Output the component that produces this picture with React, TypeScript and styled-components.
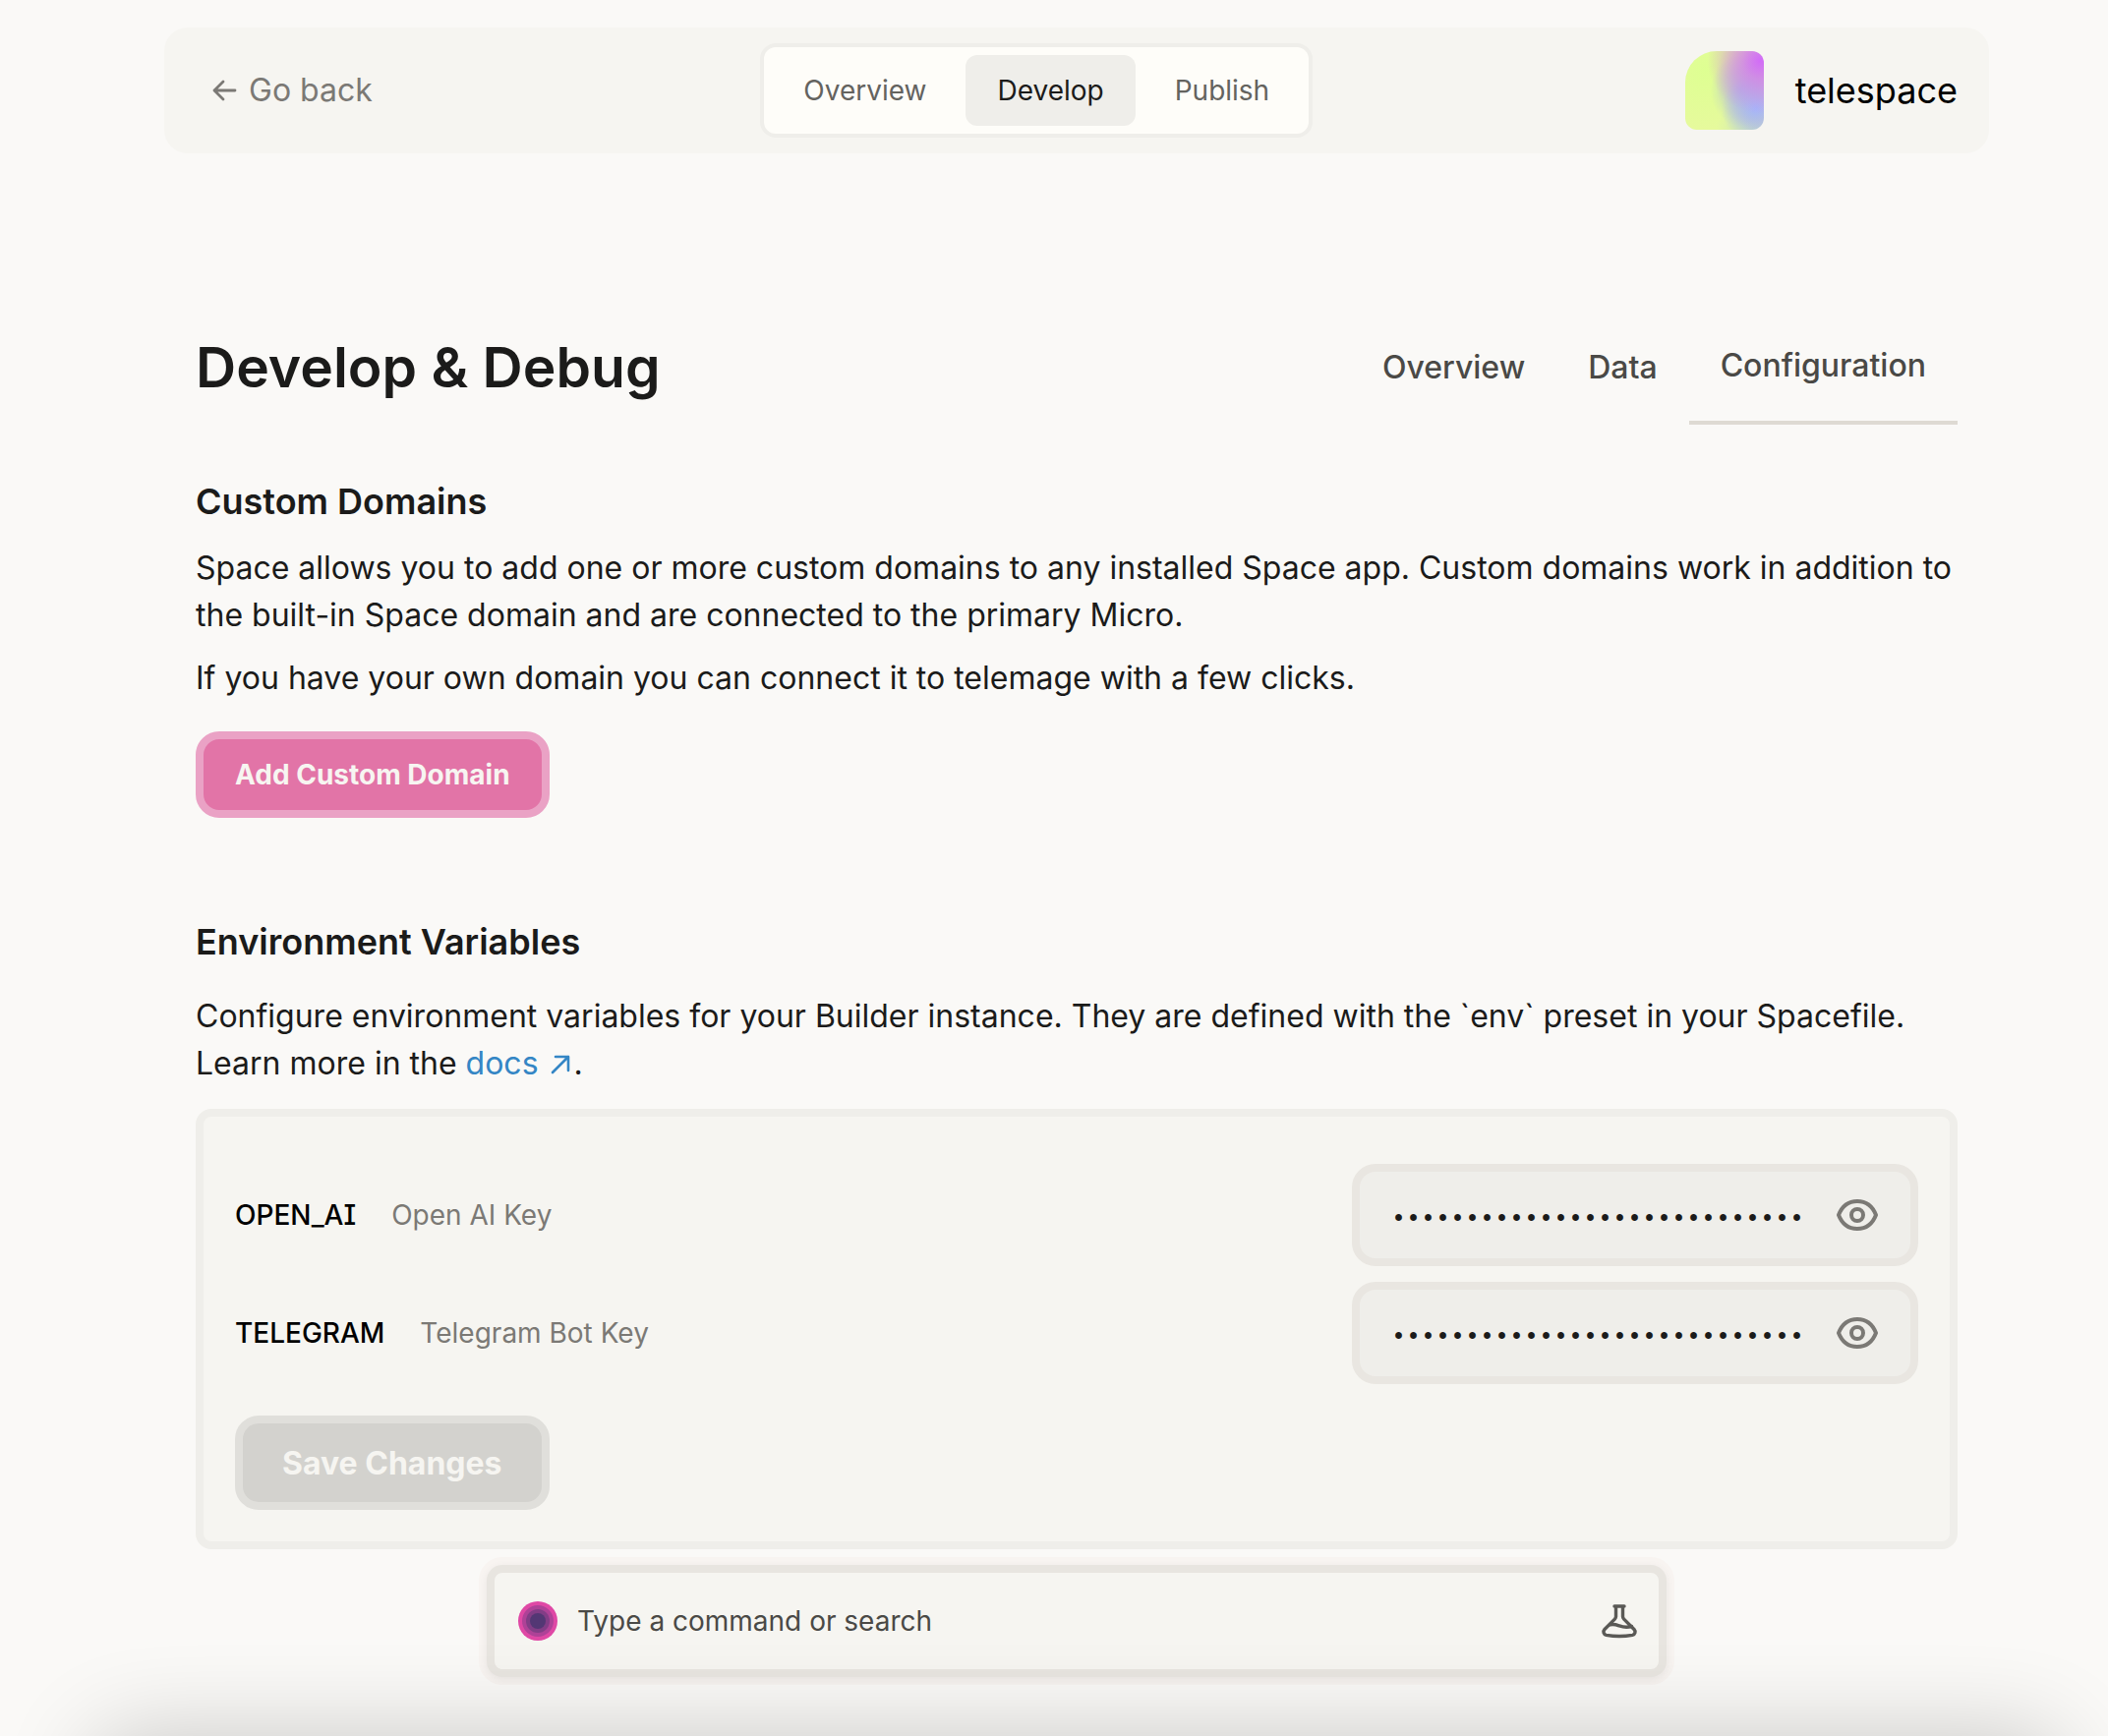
import React, { useState } from "react";
import styled, { createGlobalStyle } from "styled-components";

const GlobalStyle = createGlobalStyle`
  *, *::before, *::after { box-sizing: border-box; }
  body {
    margin: 0;
    background: #faf9f7;
    color: #1b1b1a;
    font-family: Inter, "Liberation Sans", sans-serif;
    font-size: 32px;
    line-height: 48px;
  }
  h1, h2, p { margin: 0; }
  button, input { font-family: inherit; }
  button { cursor: pointer; }
`;

const Page = styled.div`
  position: relative;
  overflow: hidden;
  min-height: 100vh;
  padding: 28px 121px 52px 167px;
  display: flex;
  flex-direction: column;
`;

const Header = styled.header`
  display: flex;
  align-items: center;
  justify-content: space-between;
  padding: 16px 32px;
  border-radius: 24px;
  background: #f6f5f1;
`;

const BackLink = styled.a`
  display: flex;
  align-items: center;
  gap: 12px;
  padding: 0 16px;
  color: #7b7975;
  text-decoration: none;
`;

const Segment = styled.nav`
  display: flex;
  gap: 8px;
  padding: 8px;
  border: 4px solid #efeeea;
  border-radius: 16px;
  background: #fefdf9;
`;

const SegmentButton = styled.button<{ $active?: boolean }>`
  height: 72px;
  padding: 0 32px;
  border: 0;
  border-radius: 12px;
  background: ${(p) => (p.$active ? "#efeeea" : "transparent")};
  color: ${(p) => (p.$active ? "#1b1b1a" : "#64635f")};
  font-size: 28px;
`;

const Brand = styled.div`
  display: flex;
  align-items: center;
  gap: 32px;
  color: #000;
  font-size: 36px;
`;

const BrandMark = styled.div`
  width: 80px;
  height: 80px;
  border-radius: 32px 12px 12px 12px;
  background:
    radial-gradient(circle at 96% 12%, #d26bf8 0%, rgba(212, 125, 235, 0.7) 18%, rgba(214, 160, 205, 0) 52%),
    radial-gradient(ellipse 44% 42% at 90% 73%, #a5b6fa 0%, rgba(168, 184, 240, 0.75) 35%, rgba(190, 210, 200, 0) 100%),
    radial-gradient(ellipse 40% 46% at 72% 50%, rgba(170, 182, 225, 0.8) 0%, rgba(200, 215, 185, 0) 100%),
    radial-gradient(ellipse 70% 70% at 108% 36%, rgba(205, 172, 215, 0.95) 0%, rgba(205, 175, 210, 0.8) 40%, rgba(215, 200, 180, 0) 100%),
    radial-gradient(ellipse 60% 50% at 100% 100%, rgba(190, 215, 205, 0.9) 0%, rgba(215, 235, 180, 0) 100%),
    radial-gradient(circle at 25% 25%, #deff92 0%, #e6fa9c 70%);
`;

const Main = styled.main`
  display: flex;
  flex-direction: column;
  padding: 160px 32px 0;
`;

const TitleRow = styled.div`
  display: flex;
  align-items: center;
  justify-content: space-between;
`;

const Title = styled.h1`
  font-size: 57px;
  line-height: 76px;
  font-weight: 600;
`;

const Tabs = styled.nav`
  display: flex;
`;

const Tab = styled.a<{ $active?: boolean }>`
  display: flex;
  align-items: center;
  height: 116px;
  padding: 0 32px;
  border-bottom: ${(p) => (p.$active ? "4px solid #dedad3" : "0")};
  color: #4a4946;
  font-weight: 500;
  text-decoration: none;
`;

const Section = styled.section<{ $top: number }>`
  display: flex;
  flex-direction: column;
  gap: 16px;
  margin-top: ${(p) => p.$top}px;
`;

const SectionTitle = styled.h2<{ $after: number }>`
  margin-bottom: ${(p) => p.$after}px;
  font-size: 36px;
  line-height: 48px;
  font-weight: 600;
`;

const DocsLink = styled.a`
  margin-right: 4px;
  color: #3486c5;
  text-decoration: none;

  svg { margin-left: 12px; }
`;

const PrimaryButton = styled.button`
  align-self: flex-start;
  height: 88px;
  margin-top: 14px;
  padding: 0 32px;
  border: 8px solid #eaa2c5;
  border-radius: 24px;
  background: #e274a7;
  color: #f7f5f1;
  font-size: 28px;
  font-weight: 700;
`;

const Panel = styled.form`
  display: flex;
  flex-direction: column;
  gap: 16px;
  margin-top: 6px;
  padding: 48px 32px 32px;
  border: 8px solid #efeeea;
  border-radius: 16px;
  background: #f6f5f1;
`;

const Row = styled.div`
  display: flex;
  align-items: center;
  justify-content: space-between;
`;

const RowLabel = styled.label`
  display: flex;
  align-items: center;
  gap: 36px;
  font-size: 28px;
`;

const VarName = styled.span`
  color: #000;
  font-weight: 500;
  font-feature-settings: "cv08";
`;

const VarNote = styled.span`
  color: #7b7975;
`;

const SecretBox = styled.div`
  display: flex;
  align-items: center;
  gap: 24px;
  width: 576px;
  height: 104px;
  padding: 0 32px;
  border: 8px solid #e9e6e1;
  border-radius: 24px;
  background: #efeeea;
`;

const SecretInput = styled.input`
  flex: 1;
  min-width: 0;
  padding: 8px 0 0;
  border: 0;
  outline: 0;
  background: transparent;
  color: #1b1b1a;
  font-family: "Liberation Mono", monospace;
  font-size: 25px;
`;

const IconButton = styled.button<{ $dark?: boolean }>`
  display: flex;
  padding: 0;
  border: 0;
  background: transparent;
  color: ${(p) => (p.$dark ? "#5a5956" : "#7b7975")};
`;

const SaveButton = styled.button`
  align-self: flex-start;
  height: 96px;
  margin-top: 16px;
  padding: 0 40px;
  border: 8px solid #e0dfdb;
  border-radius: 24px;
  background: #d3d2ce;
  color: #f6f5f1;
  font-size: 32px;
  font-weight: 700;
`;

const CommandBar = styled.div`
  align-self: center;
  display: flex;
  align-items: center;
  gap: 20px;
  width: 100%;
  max-width: 1200px;
  height: 114px;
  margin-top: 16px;
  padding: 0 20px 0 24px;
  border: 8px solid #e8e5e0;
  border-radius: 16px;
  background: #f6f5f1;
  box-shadow: 0 2px 8px rgba(0, 0, 0, 0.06), 0 0 0 8px #f8f4f1;
`;

const CommandInput = styled.input`
  flex: 1;
  min-width: 0;
  padding: 0;
  border: 0;
  outline: 0;
  background: transparent;
  font-size: 28px;

  &::placeholder { color: #4a4946; opacity: 1; }
`;

const BottomShade = styled.div`
  position: absolute;
  left: 96px;
  right: 48px;
  top: 100%;
  height: 200px;
  border-radius: 32px;
  box-shadow: 0 0 96px rgba(0, 0, 0, 0.2);
  pointer-events: none;
`;

const ArrowLeft = () => (
  <svg width="26" height="24" viewBox="0 0 26 24" fill="none" stroke="currentColor" strokeWidth="2.8" strokeLinecap="round" strokeLinejoin="round" aria-hidden="true">
    <path d="M24 12H3M12 3L3 12l9 9" />
  </svg>
);

const ArrowUpRight = () => (
  <svg width="20" height="20" viewBox="0 0 20 20" fill="none" stroke="currentColor" strokeWidth="2.6" strokeLinecap="round" strokeLinejoin="round" aria-hidden="true">
    <path d="M2 18L18 2M5 2h13v14" />
  </svg>
);

const Eye = () => (
  <svg width="44" height="36" viewBox="0 0 44 36" fill="none" stroke="currentColor" strokeWidth="4" strokeLinejoin="round" aria-hidden="true">
    <path d="M3 18C6.500 9 13.500 4 22 4s15.500 5 19 14c-3.500 9-10.500 14-19 14S6.500 27 3 18z" />
    <circle cx="22" cy="18" r="6" />
  </svg>
);

const Orb = () => (
  <svg width="40" height="40" viewBox="0 0 40 40" aria-hidden="true">
    <circle cx="20" cy="20" r="20" fill="#df48a5" />
    <circle cx="20" cy="20" r="16" fill="#ae4297" />
    <circle cx="20" cy="20" r="12" fill="#823d86" />
    <circle cx="20" cy="20" r="8" fill="#533774" />
  </svg>
);

const Flask = () => (
  <svg width="40" height="40" viewBox="0 0 40 40" fill="none" stroke="currentColor" strokeWidth="3.4" strokeLinecap="round" strokeLinejoin="round" aria-hidden="true">
    <path d="M15 5h10M16.500 5v10.500c0 1-.5 1.800-1.200 2.600L5 28.500c-2 2.200-1 5.300 1.700 5.900 8.600 1.500 18 1.500 26.600 0 2.700-.6 3.700-3.700 1.700-5.900L24.700 18.100c-.7-.8-1.200-1.600-1.200-2.600V5" />
    <path d="M10.500 23.800c4-1 6.500 0 9.500 1.100s7.500 2 12.500.6" />
  </svg>
);

const variables = [
  { name: "OPEN_AI", note: "Open AI Key" },
  { name: "TELEGRAM", note: "Telegram Bot Key" },
];

function SecretRow({ name, note }: { name: string; note: string }) {
  const [value, setValue] = useState("0".repeat(28));
  const [shown, setShown] = useState(false);
  return (
    <Row>
      <RowLabel htmlFor={name}>
        <VarName>{name}</VarName>
        <VarNote>{note}</VarNote>
      </RowLabel>
      <SecretBox>
        <SecretInput
          id={name}
          type={shown ? "text" : "password"}
          value={value}
          onChange={(e) => setValue(e.target.value)}
        />
        <IconButton type="button" aria-label="Toggle value" onClick={() => setShown(!shown)}>
          <Eye />
        </IconButton>
      </SecretBox>
    </Row>
  );
}

export default function App() {
  return (
    <>
      <GlobalStyle />
      <Page>
        <Header>
          <BackLink href="#back">
            <ArrowLeft />
            Go back
          </BackLink>
          <Segment>
            <SegmentButton>Overview</SegmentButton>
            <SegmentButton $active>Develop</SegmentButton>
            <SegmentButton>Publish</SegmentButton>
          </Segment>
          <Brand>
            <BrandMark />
            telespace
          </Brand>
        </Header>
        <Main>
          <TitleRow>
            <Title>Develop &amp; Debug</Title>
            <Tabs>
              <Tab href="#overview">Overview</Tab>
              <Tab href="#data">Data</Tab>
              <Tab href="#configuration" $active>Configuration</Tab>
            </Tabs>
          </TitleRow>
          <Section $top={54}>
            <SectionTitle $after={4}>Custom Domains</SectionTitle>
            <p>
              Space allows you to add one or more custom domains to any installed Space app. Custom domains work in addition to
              the built-in Space domain and are connected to the primary Micro.
            </p>
            <p>If you have your own domain you can connect it to telemage with a few clicks.</p>
            <PrimaryButton>Add Custom Domain</PrimaryButton>
          </Section>
          <Section $top={102}>
            <SectionTitle $after={12}>Environment Variables</SectionTitle>
            <p>
              Configure environment variables for your Builder instance. They are defined with the `env` preset in your Spacefile.
              Learn more in the <DocsLink href="#docs">docs<ArrowUpRight /></DocsLink>.
            </p>
            <Panel onSubmit={(e) => e.preventDefault()}>
              {variables.map((v) => (
                <SecretRow key={v.name} {...v} />
              ))}
              <SaveButton type="submit">Save Changes</SaveButton>
            </Panel>
          </Section>
          <CommandBar>
            <Orb />
            <CommandInput aria-label="Command" placeholder="Type a command or search" />
            <IconButton type="button" aria-label="Experiments" $dark>
              <Flask />
            </IconButton>
          </CommandBar>
        </Main>
        <BottomShade />
      </Page>
    </>
  );
}
